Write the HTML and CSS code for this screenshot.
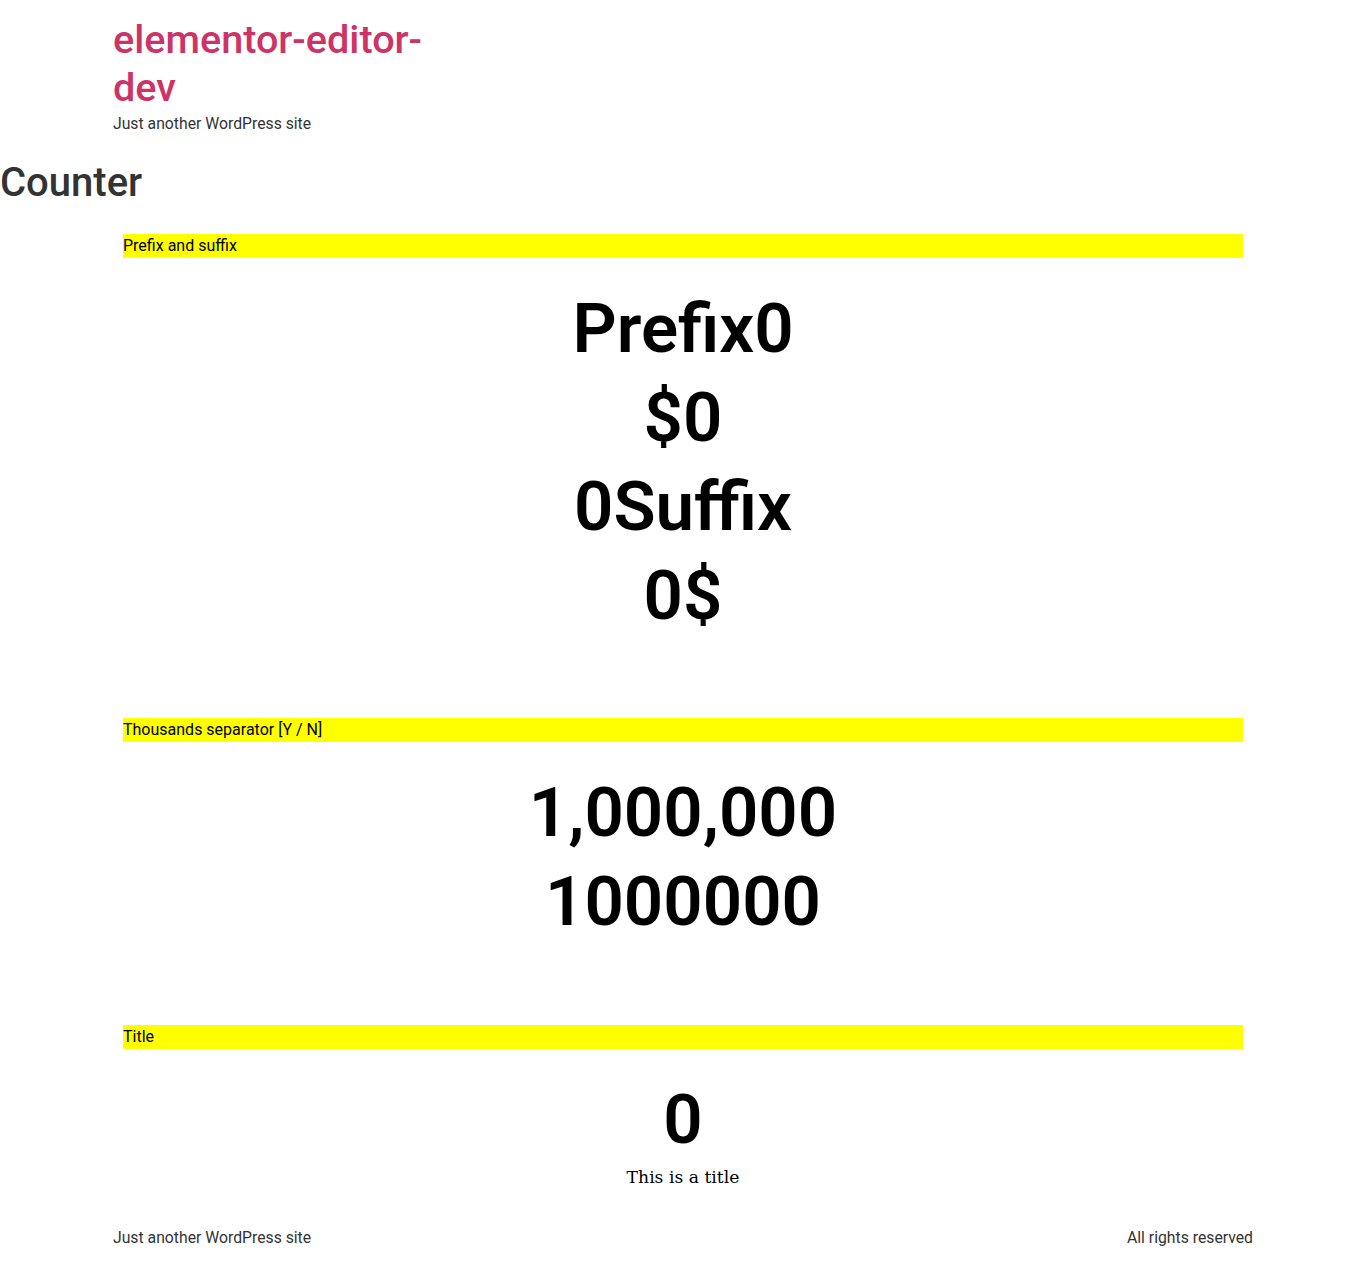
FILE: index.html
```html
<!DOCTYPE html>
<html lang="en">
<head>
<meta charset="utf-8">
<title>Counter – elementor-editor-dev</title>
<link rel="stylesheet" href="styles.css">
</head>
<body>
<header class="site-header">
  <div class="site-branding">
    <a class="site-title" href="#">elementor-editor-dev</a>
    <p class="site-description">Just another WordPress site</p>
  </div>
</header>
<main class="site-main">
  <h1 class="page-title">Counter</h1>
  <div class="page-content">
    <section class="section">
      <div class="bar">Prefix and suffix</div>
      <div class="counter">Prefix0</div>
      <div class="counter">$0</div>
      <div class="counter">0Suffix</div>
      <div class="counter">0$</div>
    </section>
    <section class="section">
      <div class="bar">Thousands separator [Y / N]</div>
      <div class="counter">1,000,000</div>
      <div class="counter">1000000</div>
    </section>
    <section class="section section-last">
      <div class="bar">Title</div>
      <div class="counter counter-titled">
        <div class="counter-number">0</div>
        <div class="counter-title">This is a title</div>
      </div>
    </section>
  </div>
</main>
<footer class="site-footer">
  <p class="footer-text">Just another WordPress site</p>
  <p class="footer-text">All rights reserved</p>
</footer>
</body>
</html>
```

FILE: styles.css
```css
* { box-sizing: border-box; }

body {
  margin: 0;
  font-family: Roboto, "Liberation Sans", sans-serif;
  font-size: 16px;
  line-height: 1.5;
  color: #333;
  background: #fff;
}

.site-header {
  max-width: 1140px;
  margin: 0 auto;
  padding: 16px 0 14px;
}

.site-title {
  display: block;
  max-width: 330px;
  font-size: 39.6px;
  line-height: 48px;
  font-weight: 500;
  color: #cc3366;
  text-decoration: none;
}

.site-description {
  margin: 0;
  font-size: 15.75px;
  line-height: 1.5;
  color: #333;
}

.page-title {
  margin: 9px 0 27px;
  font-size: 40px;
  line-height: 1.2;
  font-weight: 500;
  color: #333;
}

.page-content {
  max-width: 1140px;
  margin: 0 auto;
}

.section {
  padding: 0 10px 68.5px;
}

.section-last {
  padding-bottom: 0;
}

.bar {
  background: #ffff00;
  color: #000;
  font-size: 16px;
  line-height: 1.5;
  margin-bottom: 36px;
}

.counter {
  font-size: 69px;
  line-height: 1;
  font-weight: 600;
  color: #000;
  text-align: center;
  margin-bottom: 20px;
}

.counter-titled {
  margin-bottom: 25px;
}

.counter-title {
  font-family: "Roboto Slab", "DejaVu Serif", serif;
  font-size: 17.2px;
  line-height: 47.5px;
  font-weight: 400;
  color: #000;
}

.site-footer {
  max-width: 1140px;
  margin: 0 auto;
  display: flex;
  justify-content: space-between;
  padding-bottom: 14px;
}

.footer-text {
  margin: 0;
  font-size: 15.75px;
  line-height: 1.5;
  color: #333;
}
```
